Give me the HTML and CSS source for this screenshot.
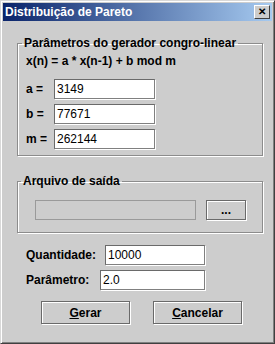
FILE: index.html
```html
<!DOCTYPE html>
<html>
<head>
    <meta charset="UTF-8">
    <title>Distribuição de Pareto</title>
    <link rel="stylesheet" href="styles.css">
</head>
<body>
    <div class="window">
        <div class="titlebar">
            <span class="title">Distribuição de Pareto</span>
            <span class="close">✕</span>
        </div>

        <div class="content">
            <fieldset class="group group-gen">
                <legend>Parâmetros do gerador congro-linear</legend>
                <div class="formula">x(n) = a * x(n-1) + b mod m</div>
                <div class="param-row">
                    <label>a =</label>
                    <input class="field" type="text" value="3149">
                </div>
                <div class="param-row">
                    <label>b =</label>
                    <input class="field" type="text" value="77671">
                </div>
                <div class="param-row">
                    <label>m =</label>
                    <input class="field" type="text" value="262144">
                </div>
            </fieldset>

            <fieldset class="group group-file">
                <legend>Arquivo de saída</legend>
                <div class="file-row">
                    <input class="field field-disabled" type="text" disabled>
                    <button class="btn btn-small">...</button>
                </div>
            </fieldset>

            <div class="fields">
                <div class="field-row">
                    <label>Quantidade:</label>
                    <input class="field field-qtd" type="text" value="10000">
                </div>
                <div class="field-row">
                    <label>Parâmetro:</label>
                    <input class="field field-par" type="text" value="2.0">
                </div>
            </div>

            <div class="buttons">
                <button class="btn btn-main"><u>G</u>erar</button>
                <button class="btn btn-main"><u>C</u>ancelar</button>
            </div>
        </div>
    </div>
</body>
</html>
```

FILE: styles.css
```css
body {
    margin: 0;
    padding: 0;
    background: #cdcdcd;
    font-family: "Liberation Sans", Arial, sans-serif;
    font-size: 12px;
    color: #000;
}

.window {
    width: 275px;
    height: 344px;
    box-sizing: border-box;
    background: #cdcdcd;
    border: 1px solid;
    border-color: #d8d8d8 #404040 #404040 #d8d8d8;
    box-shadow: inset 1px 1px 0 #fff, inset -1px -1px 0 #808080;
    padding: 2px;
}

.titlebar {
    height: 18px;
    display: flex;
    align-items: center;
    justify-content: space-between;
    padding: 0 2px 0 2px;
    background: linear-gradient(to right, #0a246a, #a6caf0);
}

.title {
    color: #fff;
    font-weight: bold;
    font-size: 12px;
}

.close {
    width: 16px;
    height: 14px;
    box-sizing: border-box;
    background: #cdcdcd;
    border: 1px solid;
    border-color: #fff #404040 #404040 #fff;
    font-size: 10px;
    font-weight: bold;
    line-height: 12px;
    text-align: center;
    color: #000;
}

.content {
    padding: 15px 9px 0 14px;
}

.group {
    margin: 0;
    min-width: 0;
    border: 1px solid #8c8c8c;
    box-shadow: 1px 1px 0 #fff, inset 1px 1px 0 #fff;
}

.group legend {
    font-weight: bold;
    font-size: 12px;
    line-height: 14px;
    padding: 0 2px;
    margin-left: -4px;
}

.group-gen {
    padding: 4px 8px 6px 8px;
}

.formula {
    font-weight: bold;
    line-height: 14px;
    margin-bottom: 11px;
}

.param-row {
    display: flex;
    align-items: center;
    height: 20px;
    margin-bottom: 5px;
}

.param-row:last-child {
    margin-bottom: 0;
}

.param-row label {
    width: 28px;
    font-weight: bold;
}

.field {
    height: 20px;
    box-sizing: border-box;
    margin: 0;
    padding: 0 2px;
    border: 1px solid #6a6a6a;
    border-right-color: #808080;
    border-bottom-color: #808080;
    box-shadow: 1px 1px 0 #fff;
    background: #fff;
    font-family: "Liberation Sans", Arial, sans-serif;
    font-size: 12px;
    color: #000;
    outline: none;
}

.param-row .field {
    width: 101px;
}

.group-file {
    margin-top: 18px;
    padding: 12px 16px 12px 17px;
}

.group-file legend {
    margin-left: -14px;
}

.file-row {
    display: flex;
    gap: 10px;
}

.field-disabled {
    width: 161px;
    background: transparent;
    border: 1px solid #9a9a9a;
    box-shadow: none;
}

.btn {
    box-sizing: border-box;
    margin: 0;
    padding: 0;
    background: #cdcdcd;
    border: 1px solid #6a6a6a;
    box-shadow: 1px 1px 0 #fff, inset 1px 1px 0 #fff;
    font-family: "Liberation Sans", Arial, sans-serif;
    font-size: 12px;
    font-weight: bold;
    color: #000;
}

.btn-small {
    width: 40px;
    height: 20px;
    line-height: 14px;
}

.fields {
    width: 179px;
    margin: 12px 0 0 9px;
}

.field-row {
    display: flex;
    align-items: center;
    justify-content: space-between;
    margin-bottom: 5px;
}

.field-row label {
    font-weight: bold;
}

.field-qtd {
    width: 100px;
}

.field-par {
    width: 105px;
}

.buttons {
    display: flex;
    gap: 23px;
    margin: 11px 0 0 24px;
}

.btn-main {
    width: 89px;
    height: 23px;
}
```
